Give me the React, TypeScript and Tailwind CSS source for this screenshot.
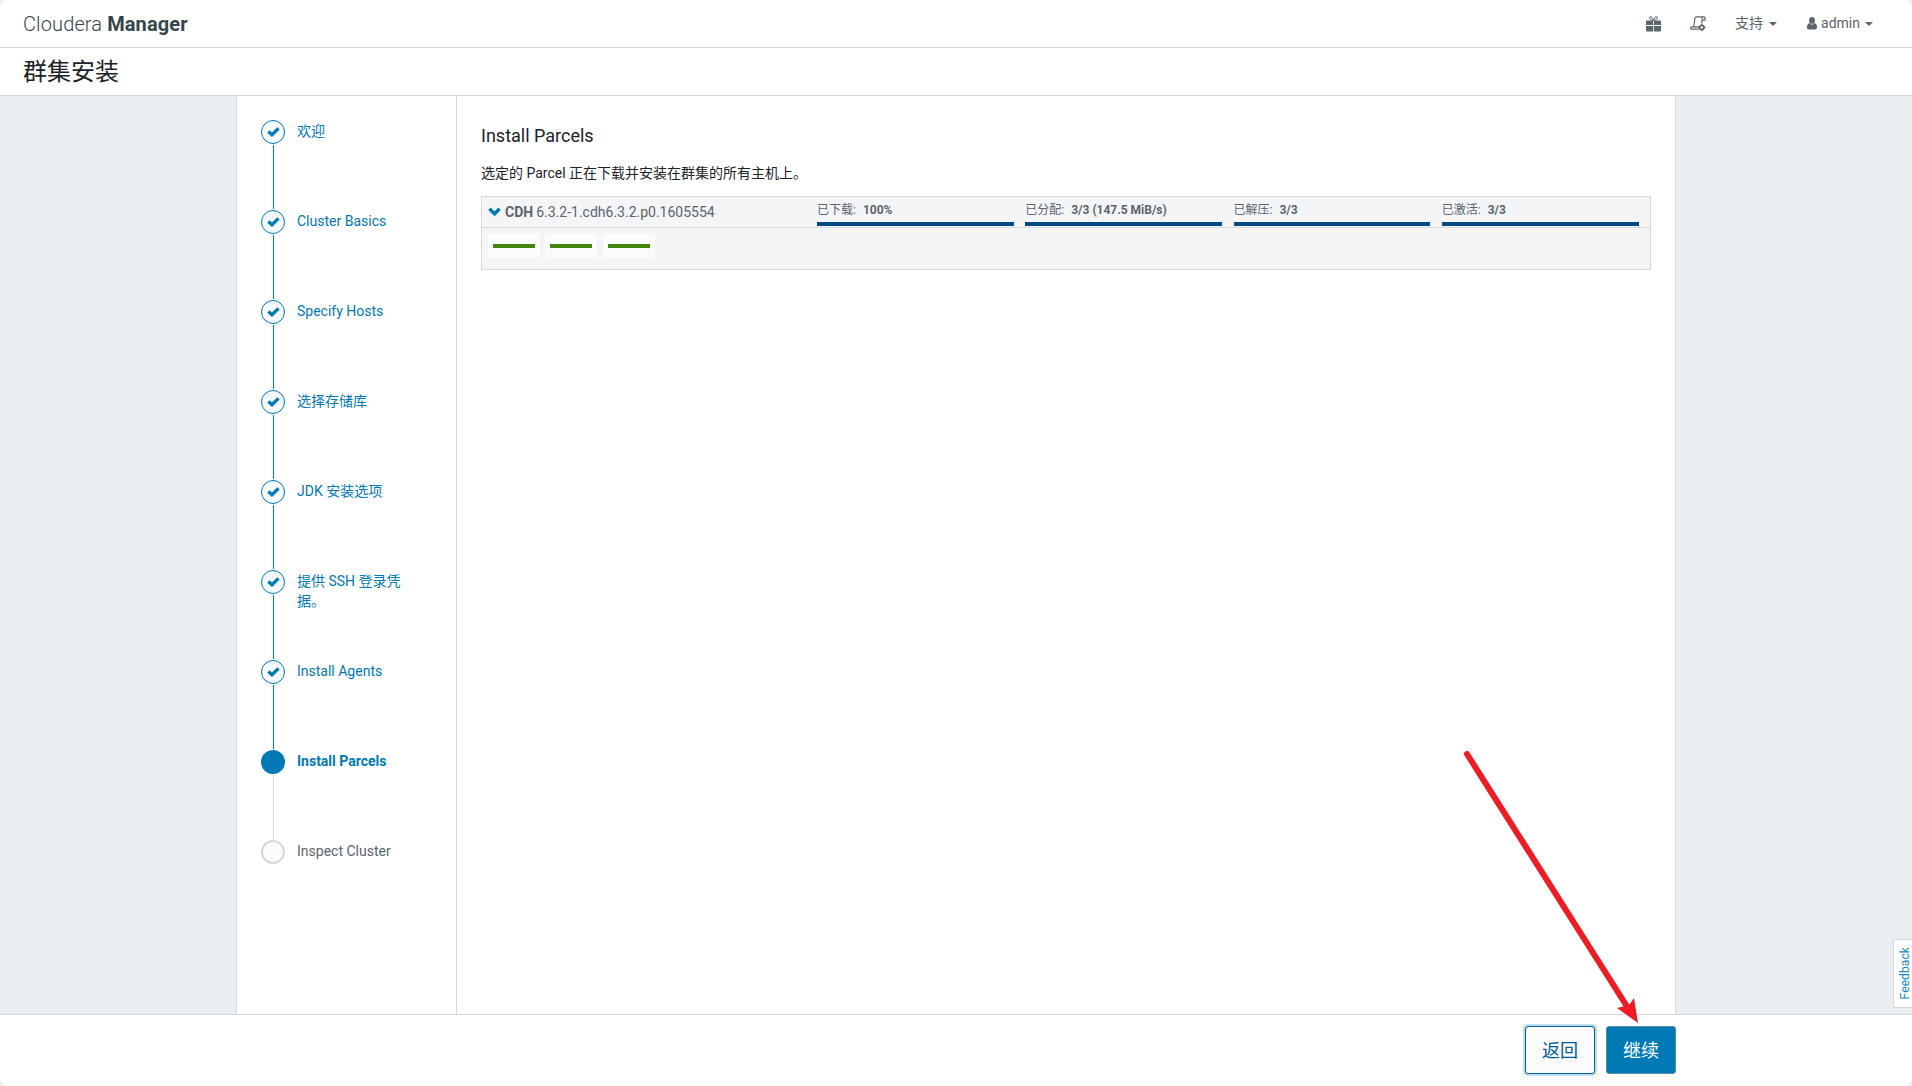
import React from "react";

const steps = [
  { label: "欢迎", state: "done" },
  { label: "Cluster Basics", state: "done" },
  { label: "Specify Hosts", state: "done" },
  { label: "选择存储库", state: "done" },
  { label: "JDK 安装选项", state: "done" },
  { label: "提供 SSH 登录凭据。", state: "done" },
  { label: "Install Agents", state: "done" },
  { label: "Install Parcels", state: "current" },
  { label: "Inspect Cluster", state: "todo" },
];

const progress = [
  { label: "已下载", value: "100%" },
  { label: "已分配", value: "3/3 (147.5 MiB/s)" },
  { label: "已解压", value: "3/3" },
  { label: "已激活", value: "3/3" },
];

const circleClass: Record<string, string> = {
  done: "border border-[#0079b5] bg-[#f5faff]",
  current: "bg-[#0079b5]",
  todo: "border-2 border-[#d6d8db] bg-[#fafbfd]",
};

const labelClass: Record<string, string> = {
  done: "text-[#0079b5]",
  current: "font-bold text-[#0079b5]",
  todo: "text-[#5a656d]",
};

function CheckIcon() {
  return (
    <svg className="h-[10px] w-[13px]" viewBox="0 0 13 10">
      <path d="M1.4 4.400 5 7.700 11.500 1.400" fill="none" stroke="#0079b5" strokeWidth="3.400" />
    </svg>
  );
}

function GiftIcon() {
  return (
    <svg className="h-4 w-[15px]" viewBox="0 0 15 16" fill="#5a656d">
      <path d="M1 4.500h6.100V9H0V5.500a1 1 0 0 1 1-1zM7.900 4.500H14a1 1 0 0 1 1 1V9H7.900zM0 10h7.100v5.500H1a1 1 0 0 1-1-1zM7.900 10H15v4.500a1 1 0 0 1-1 1H7.900z" />
      <path d="M7.500 4.500C6.800 1.500 5.300.2 4 .8S3.400 3.500 7.500 4.500C8.200 1.500 9.700.2 11 .8s.6 2.700-3.500 3.700z" fill="none" stroke="#5a656d" strokeWidth="1" />
    </svg>
  );
}

function ScrollIcon() {
  return (
    <svg className="h-4 w-4" viewBox="0 0 16 16" fill="none" stroke="#5a656d" strokeWidth="1.200">
      <path d="M9 13.200H1.800C.3 13.200.3 10.800 1.800 10.800H3.200C4.600 9 4.400 5 4.800 2.600 5 1.400 5.600.8 6.600.8h7.200c1.600 0 1.800 3.400.8 3.400h-2M13 .8c-1.400.6-1.200 3-1.200 6.700M3.200 10.800h5.600" />
      <circle cx="11.800" cy="11.400" r="2.100" strokeWidth="1.700" />
      <path d="M11.800 8v1.200M11.800 13.600v1.600M8.300 11.400h1.200M14 11.400h1.500" />
    </svg>
  );
}

function UserIcon() {
  return (
    <svg className="h-[13px] w-[10px]" viewBox="0 0 10 13" fill="#5a656d">
      <ellipse cx="5" cy="3.400" rx="2.900" ry="3.400" />
      <path d="M2.300 6C.6 6.500 0 8.500 0 10.300 0 11.900.8 12.500 2 12.500h6c1.200 0 2-.6 2-2.200C10 8.500 9.400 6.500 7.700 6 7 6.900 6.100 7.500 5 7.500S3 6.900 2.300 6z" />
    </svg>
  );
}

function Caret() {
  return <span className="h-0 w-0 border-x-4 border-t-4 border-x-transparent border-t-[#5a656d]" />;
}

function Steps() {
  return (
    <nav className="w-[221px] shrink-0 border-x border-[#d6d8db] bg-white pt-6 pl-6">
      {steps.map((s, i) => (
        <div key={s.label} className="flex h-[90px] gap-3">
          <div className="flex w-6 shrink-0 flex-col">
            <div className={`flex size-6 shrink-0 items-center justify-center rounded-full ${circleClass[s.state]}`}>
              {s.state === "done" && <CheckIcon />}
            </div>
            {i < steps.length - 1 && (
              <div className={`my-px ml-3 w-px flex-1 ${s.state === "done" ? "bg-[#0079b5]" : "bg-[#d6d8db]"}`} />
            )}
          </div>
          <div className={`w-[116px] pt-px text-[14px] leading-5 ${labelClass[s.state]}`}>{s.label}</div>
        </div>
      ))}
    </nav>
  );
}

function ParcelTable() {
  return (
    <section className="mt-[13px] h-[74px] border border-[#d6d8db] bg-[#f3f5f7] text-[#5a656d]">
      <div className="flex h-[31px] border-b border-[#d6d8db]">
        <div className="flex w-[335px] shrink-0 items-center pl-[6px] text-[14px]">
          <svg className="mr-1 h-[10px] w-[13px]" viewBox="0 0 13 10">
            <path d="M1.400 1.800 6.500 6.800 11.600 1.800" fill="none" stroke="#0079b5" strokeWidth="3.400" />
          </svg>
          <b className="mr-[3px]">CDH</b>
          <span>6.3.2-1.cdh6.3.2.p0.1605554</span>
        </div>
        <div className="grid flex-1 grid-cols-4">
          {progress.map((p) => (
            <div key={p.label} className="mr-[11.500px] flex flex-col">
              <div className="h-[25px] pt-[3px] text-[12px] leading-5">
                {p.label}<span className="mr-[7px]">:</span>
                <b>{p.value}</b>
              </div>
              <div className="h-1 bg-[#004b85]" />
            </div>
          ))}
        </div>
      </div>
      <div className="flex gap-[5.400px] pt-[6px] pl-[6px]">
        {[0, 1, 2].map((h) => (
          <div key={h} className="flex h-6 w-[52px] items-center justify-center bg-[#fafbfd]">
            <div className="h-1 w-[42px] bg-[#43850e]" />
          </div>
        ))}
      </div>
    </section>
  );
}

export default function App() {
  return (
    <div className="relative flex h-[1086px] w-[1912px] flex-col overflow-hidden bg-[#f0f0f0] font-[Roboto,'Noto_Sans_CJK_SC',sans-serif] text-[#1b2329]">
      <div className="flex flex-1 flex-col overflow-hidden rounded-[8px] bg-white">
        <header className="flex h-12 shrink-0 items-center border-b border-[#d6d8db] pl-[23px] text-[14px] text-[#5a656d]">
          <div className="text-[20px] font-light tracking-[0.12px] text-[#36454d]">
            Cloudera <span className="font-bold">Manager</span>
          </div>
          <div className="ml-auto flex items-center pr-[39px]">
            <GiftIcon />
            <span className="ml-[29px]"><ScrollIcon /></span>
            <span className="mr-[6px] ml-[29px]">支持</span>
            <Caret />
            <span className="mr-1 ml-[30px]"><UserIcon /></span>
            <span className="mr-[5px]">admin</span>
            <Caret />
          </div>
        </header>
        <div className="flex h-12 shrink-0 items-center border-b border-[#d6d8db] pl-[23px] text-[24px]">群集安装</div>
        <div className="flex min-h-0 flex-1 justify-center bg-[#eaeef1]">
          <Steps />
          <main className="w-[1219px] border-r border-[#d6d8db] bg-white px-6 pt-[26px]">
            <h1 className="text-[18px] leading-7">Install Parcels</h1>
            <p className="mt-[13px] text-[14px] leading-5">选定的 Parcel 正在下载并安装在群集的所有主机上。</p>
            <ParcelTable />
          </main>
        </div>
        <footer className="flex h-[72px] shrink-0 justify-end gap-[11px] border-t border-[#d6d8db] pt-[11px] pr-[236px] text-[18px]">
          <button className="h-12 w-[70px] rounded-[3px] border border-[#00609c] bg-[#fafbfd] text-[#005a94] ring-2 ring-[#bfdded]">返回</button>
          <button className="h-12 w-[70px] rounded-[3px] border border-[#5f8ba5] bg-[#0079b5] text-white">继续</button>
        </footer>
      </div>
      <div className="absolute top-[939px] right-0 flex h-[69px] w-[19px] items-center justify-center border border-r-0 border-[#d6d8db] bg-white pl-[3px]">
        <span className="rotate-180 text-[12px] tracking-[0.1px] text-[#2089c4] [writing-mode:vertical-rl]">Feedback</span>
      </div>
      <svg className="absolute top-[740px] left-[1450px] h-[290px] w-[200px]" viewBox="1450 740 200 290">
        <path d="M1467 754 1628 1008" stroke="#ee1c25" strokeWidth="6" strokeLinecap="round" />
        <path d="M1638 1023 1617 1008 1629 1005 1634 998z" fill="#ee1c25" />
      </svg>
    </div>
  );
}
